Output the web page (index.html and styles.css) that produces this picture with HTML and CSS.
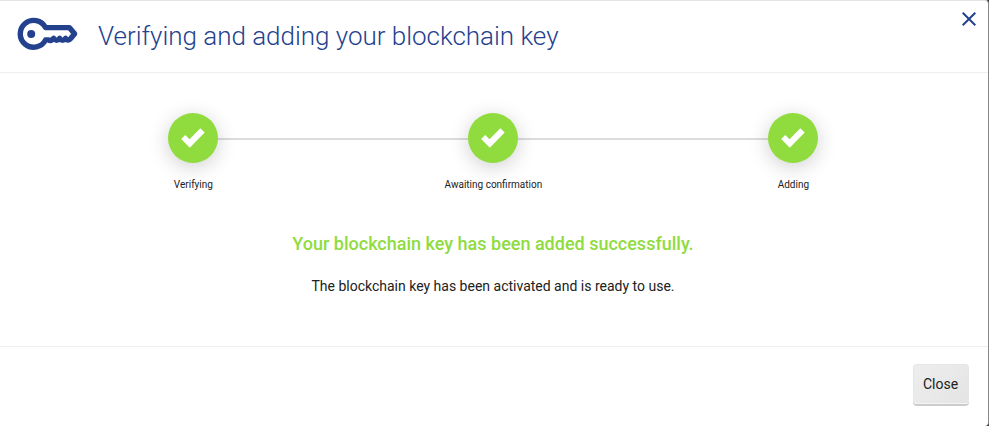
FILE: index.html
```html
<!DOCTYPE html>
<html lang="en">
<head>
<meta charset="utf-8">
<title>Blockchain key</title>
<link rel="stylesheet" href="styles.css">
</head>
<body>
<div class="dialog">
  <header class="header">
    <svg class="key" viewBox="0 0 62 34" width="62" height="34">
      <path d="M28.5 10.6H52.3L57.6 16.8L53.5 21.7Q51.3 24.6 48.6 21.4Q45.6 25.4 42.6 21.4Q39.6 25.4 36.6 21.4Q33.6 24.6 31.6 22.9H28.6A13.4 13.4 0 1 1 28.5 10.6Z" fill="none" stroke="#24418e" stroke-width="5.4" stroke-linejoin="round"/>
      <circle cx="14.2" cy="16.9" r="4" fill="#24418e"/>
    </svg>
    <h1 class="title"><span>Verifying and adding your blockchain key</span></h1>
    <button class="dismiss" aria-label="Dismiss">
      <svg viewBox="0 0 14 14" width="14" height="14"><path d="M.7 .7L13.3 13.3M13.3 .7L.7 13.3" stroke="#24418e" stroke-width="2" fill="none"/></svg>
    </button>
  </header>
  <main class="content">
    <ol class="steps">
      <li class="step"><div class="mark"><svg viewBox="0 0 26 22" width="26" height="22"><path d="M1.2 12L5.2 8L9.5 12.2L20.3 1.3L24.7 5.5L9.8 20.8Z" fill="#fff"/></svg></div><span class="label">Verifying</span></li>
      <li class="step"><div class="mark"><svg viewBox="0 0 26 22" width="26" height="22"><path d="M1.2 12L5.2 8L9.5 12.2L20.3 1.3L24.7 5.5L9.8 20.8Z" fill="#fff"/></svg></div><span class="label">Awaiting confirmation</span></li>
      <li class="step"><div class="mark"><svg viewBox="0 0 26 22" width="26" height="22"><path d="M1.2 12L5.2 8L9.5 12.2L20.3 1.3L24.7 5.5L9.8 20.8Z" fill="#fff"/></svg></div><span class="label">Adding</span></li>
    </ol>
    <h2 class="success">Your blockchain key has been added successfully.</h2>
    <p class="message">The blockchain key has been activated and is ready to use.</p>
  </main>
  <footer class="footer"><button class="close">Close</button></footer>
</div>
</body>
</html>
```
FILE: styles.css
```css
* { box-sizing: border-box; }
body {
  margin: 0;
  background: #333;
  font-family: Roboto, sans-serif;
  color: #212121;
}
.dialog {
  display: flex;
  flex-direction: column;
  height: 426px;
  background: #fff;
  border-top: 1px solid #e3e3e3;
  border-right: 1px solid #888;
  border-radius: 0 4px 4px 0;
  overflow: hidden;
}
.header {
  display: flex;
  align-items: flex-start;
  height: 72px;
  padding: 0 12.5px 0 17px;
  border-bottom: 1px solid #eee;
}
.key { margin-top: 16px; overflow: visible; }
.title {
  flex: 1;
  margin: 20px 0 0 19px;
  font-size: 26px;
  line-height: 31px;
  font-weight: 300;
  letter-spacing: -.02px;
  color: #24418e;
  white-space: nowrap;
}
.dismiss {
  display: flex;
  margin-top: 11px;
  padding: 0;
  border: 0;
  background: none;
}
.content {
  height: 274px;
  padding-top: 40px;
  border-bottom: 1px solid #eee;
  text-align: center;
}
.steps {
  display: flex;
  width: 900px;
  margin: 0 0 0 43.4px;
  padding: 0;
  list-style: none;
}
.step {
  flex: 1;
  display: flex;
  flex-direction: column;
  align-items: center;
  background: linear-gradient(#dcdcdc, #dcdcdc) 0 25px / 100% 2px no-repeat;
}
.step:first-child { background-position: 150px 25px; }
.step:last-child { background-size: 50% 2px; }
.mark {
  display: flex;
  align-items: center;
  justify-content: center;
  width: 50px;
  height: 50px;
  border-radius: 50%;
  background: #90db3e;
  box-shadow: 0 4px 20px rgba(0, 0, 0, .19);
}
.label {
  margin-top: 15px;
  font-size: 10px;
  line-height: 14px;
}
.success {
  margin: 39px 0 0;
  padding-right: 2px;
  font-size: 18px;
  line-height: 26px;
  font-weight: 500;
  color: #90db3e;
}
.message {
  margin: 19px 0 0;
  padding-right: 2px;
  font-size: 14px;
  line-height: 20px;
}
.footer {
  display: flex;
  flex: 1;
  justify-content: flex-end;
  padding: 17px 19px 0 0;
}
.close {
  width: 56px;
  height: 40px;
  padding: 0 1px 0 0;
  border: 1px solid #e6e6e6;
  border-bottom-color: #f4f4f4;
  border-radius: 4px;
  background: linear-gradient(135deg, #eee, #e4e4e4);
  box-shadow: 0 2px 0 #ccc;
  font: 14px Roboto, sans-serif;
  color: #212121;
}
```
